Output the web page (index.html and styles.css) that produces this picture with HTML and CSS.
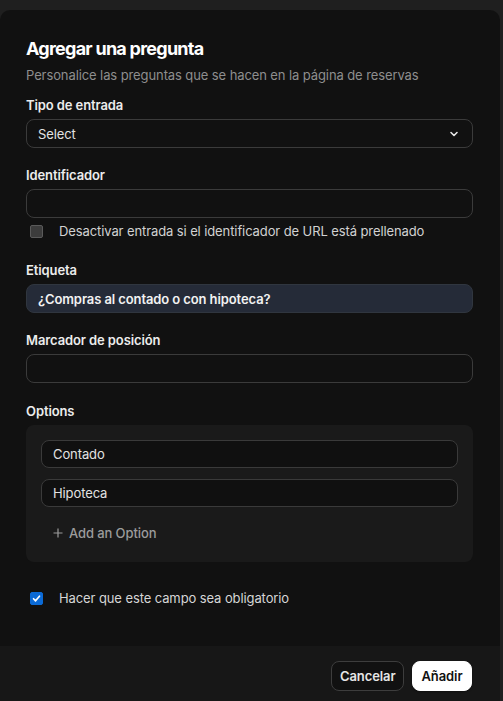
FILE: index.html
```html
<!DOCTYPE html>
<html lang="es">
<head>
<meta charset="utf-8">
<title>Agregar una pregunta</title>
<link rel="stylesheet" href="styles.css">
</head>
<body>
<div class="modal">
  <div class="content">
    <h1 class="title">Agregar una pregunta</h1>
    <p class="subtitle">Personalice las preguntas que se hacen en la página de reservas</p>

    <div class="field first">
      <label class="label">Tipo de entrada</label>
      <div class="select">
        <span>Select</span>
        <svg class="chev" width="10" height="10" viewBox="0 0 10 10"><path d="M2 3.5 L5 6.5 L8 3.5" fill="none" stroke="#e6e6e6" stroke-width="1.6" stroke-linecap="round" stroke-linejoin="round"/></svg>
      </div>
    </div>

    <div class="field">
      <label class="label">Identificador</label>
      <div class="input"></div>
      <div class="check-row small">
        <span class="box"></span>
        <span class="check-text">Desactivar entrada si el identificador de URL está prellenado</span>
      </div>
    </div>

    <div class="field wide">
      <label class="label">Etiqueta</label>
      <div class="input filled">¿Compras al contado o con hipoteca?</div>
    </div>

    <div class="field">
      <label class="label">Marcador de posición</label>
      <div class="input"></div>
    </div>

    <div class="field opts">
      <label class="label">Options</label>
      <div class="options">
        <div class="input opt">Contado</div>
        <div class="input opt">Hipoteca</div>
        <div class="add">
          <svg width="10" height="10" viewBox="0 0 10 10"><path d="M5 0.5 V9.5 M0.5 5 H9.5" stroke="#9a9a9a" stroke-width="1.2"/></svg>
          <span>Add an Option</span>
        </div>
      </div>
    </div>

    <div class="check-row required">
      <span class="box checked">
        <svg width="13" height="13" viewBox="0 0 13 13"><path d="M3 6.8 L5.4 9.2 L10 3.8" fill="none" stroke="#fff" stroke-width="2" stroke-linecap="round" stroke-linejoin="round"/></svg>
      </span>
      <span class="check-text">Hacer que este campo sea obligatorio</span>
    </div>
  </div>

  <div class="footer">
    <button class="btn cancel">Cancelar</button>
    <button class="btn add-btn">Añadir</button>
  </div>
</div>
</body>
</html>
```

FILE: styles.css
```css
* { box-sizing: border-box; }

html, body {
  margin: 0;
  padding: 0;
  background: #1f1f1f;
  height: 100%;
}

body {
  font-family: Inter, "Noto Sans", sans-serif;
  color: #e8e8e8;
  padding-top: 10px;
  overflow: hidden;
  letter-spacing: -0.1px;
}

.modal {
  width: 500px;
  height: 691px;
  background: #111111;
  border-radius: 10px 10px 0 0;
  display: flex;
  flex-direction: column;
}

.content {
  flex: 1;
  padding: 27px 27px 0 26px;
  display: flex;
  flex-direction: column;
}

.title {
  margin: 0;
  font-size: 18px;
  line-height: 24px;
  font-weight: 700;
  letter-spacing: -0.75px;
  color: #ffffff;
}

.subtitle {
  margin: 5px 0 0;
  font-size: 13px;
  line-height: 18px;
  color: #8e8e8e;
}

.field {
  display: flex;
  flex-direction: column;
  margin-top: 18px;
}

.field.first { margin-top: 12px; }
.field.wide { margin-top: 21px; }
.field.opts { margin-top: 19px; }

.label {
  font-size: 13px;
  line-height: 18px;
  font-weight: 600;
  color: #ececec;
  margin-bottom: 5px;
}

.select,
.input {
  height: 29px;
  border: 1px solid #3b3b3b;
  border-radius: 8px;
  background: #111111;
  display: flex;
  align-items: center;
  padding: 0 11px;
  font-size: 13px;
  color: #e2e2e2;
}

.select {
  justify-content: space-between;
  padding-right: 13px;
}

.chev { display: block; }

.input.filled {
  background: #252b38;
  border-color: #30363f;
  font-weight: 600;
  color: #f2f2f2;
}

.check-row {
  display: flex;
  align-items: center;
  height: 18px;
  margin-top: 4px;
  padding-left: 4px;
}

.box {
  width: 13px;
  height: 13px;
  border-radius: 2px;
  background: #3c3c3c;
  border: 1px solid #5a5a5a;
  flex: none;
  display: flex;
  align-items: center;
  justify-content: center;
}

.box.checked {
  background: #0b6ad6;
  border-color: #0b6ad6;
}

.box.checked svg { display: block; }

.check-text {
  margin-left: 16px;
  font-size: 13px;
  font-weight: 400;
  color: #d2d2d2;
}

.options {
  background: #1a1a1a;
  border-radius: 8px;
  padding: 15px 15px 14px;
  display: flex;
  flex-direction: column;
  gap: 11px;
}

.input.opt {
  height: 28px;
  background: #101010;
  border-color: #3a3a3a;
}

.add {
  height: 30px;
  display: flex;
  align-items: center;
  padding-left: 12px;
  gap: 6px;
  font-size: 13px;
  font-weight: 500;
  color: #9c9c9c;
}

.add svg { display: block; }

.required {
  margin-top: 27px;
}

.required .check-text { color: #d6d6d6; }

.footer {
  height: 55px;
  background: #171717;
  display: flex;
  justify-content: flex-end;
  align-items: flex-start;
  padding: 15px 28px 0 0;
  gap: 8px;
}

.btn {
  height: 30px;
  border-radius: 8px;
  font-family: Inter, "Noto Sans", sans-serif;
  font-size: 13px;
  font-weight: 600;
  padding: 0 8px;
  cursor: pointer;
  letter-spacing: -0.1px;
}

.cancel {
  width: 73px;
  background: #111111;
  border: 1px solid #3d3d3d;
  color: #e6e6e6;
}

.add-btn {
  width: 60px;
  background: #ffffff;
  border: 1px solid #ffffff;
  color: #111111;
  box-shadow: 0 1px 2px rgba(0,0,0,0.4);
}
```
